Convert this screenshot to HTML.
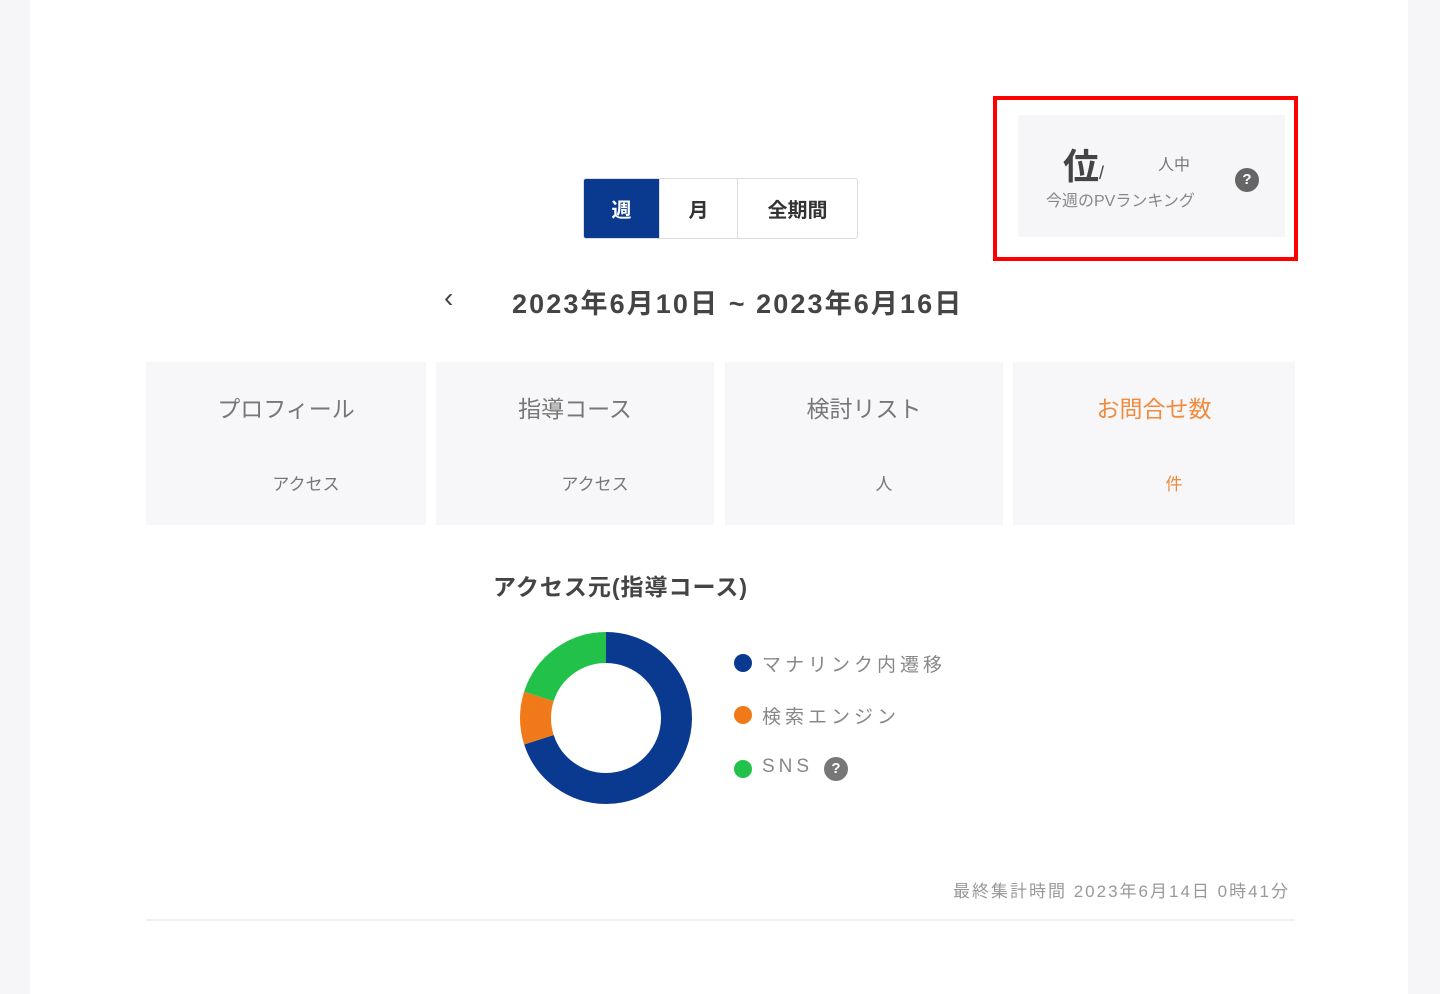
<!DOCTYPE html>
<html><head><meta charset="utf-8"><style>
*{margin:0;padding:0;box-sizing:border-box}
body{width:1440px;height:994px;background:#f6f6f8;font-family:"Liberation Sans","Noto Sans CJK JP",sans-serif;position:relative;overflow:hidden;color:#333}
.main{position:absolute;left:30px;top:0;width:1378px;height:994px;background:#fff}
.a{position:absolute}
.tog{left:583px;top:178px;height:61px;display:flex;border:1px solid #ddd;border-radius:3px;overflow:hidden}
.tog div{display:flex;align-items:center;justify-content:center;font-size:20px;font-weight:bold;color:#333;border-left:1px solid #ddd}
.card{top:362px;height:163px;background:#f7f7fa;text-align:center}
.card .t{position:absolute;top:28px;left:0;right:0;font-size:23px;color:#777}
.card .s{position:absolute;top:108px;left:0;right:0;font-size:17px;color:#777;padding-left:40px}
.dot{width:18px;height:18px;border-radius:50%}
.lg{font-size:19px;color:#888;letter-spacing:4px}
</style></head><body>
<div class="main"></div>
<div class="a" style="left:993px;top:96px;width:305px;height:165px;border:4px solid #f00"></div>
<div class="a" style="left:1018px;top:115px;width:267px;height:122px;background:#f6f6f9"></div>
<div class="a" style="left:1063px;top:138px;font-size:36px;font-weight:bold;color:#444">位<span style="font-size:18px;font-weight:normal">/</span></div>
<div class="a" style="left:1158px;top:151px;font-size:16px;color:#777">人中</div>
<div class="a" style="left:1046px;top:187px;font-size:16px;color:#888">今週のPVランキング</div>
<div class="a" style="left:1235px;top:168px;width:24px;height:24px;border-radius:50%;background:#666;color:#fff;font-size:15px;text-align:center;line-height:24px;font-weight:bold">?</div>

<div class="a tog"><div style="width:75px;background:#0a3a8f;color:#fff;border:none">週</div><div style="width:78px">月</div><div style="width:120px">全期間</div></div>

<div class="a" style="left:444px;top:282px;font-size:28px;color:#444">‹</div>
<div class="a" style="left:512px;top:282px;font-size:27px;font-weight:bold;color:#444;letter-spacing:2.1px">2023年6月10日 ~ 2023年6月16日</div>

<div class="a card" style="left:146px;width:280px"><div class="t">プロフィール</div><div class="s">アクセス</div></div>
<div class="a card" style="left:436px;width:278px"><div class="t">指導コース</div><div class="s">アクセス</div></div>
<div class="a card" style="left:725px;width:278px"><div class="t">検討リスト</div><div class="s">人</div></div>
<div class="a card" style="left:1013px;width:282px"><div class="t" style="color:#f08a3c">お問合せ数</div><div class="s" style="color:#f08a3c">件</div></div>

<div class="a" style="left:493px;top:568px;font-size:23px;font-weight:bold;color:#444;letter-spacing:1px">アクセス元(指導コース)</div>

<svg class="a" style="left:506px;top:618px" width="200" height="200" viewBox="0 0 200 200">
<g fill="none" stroke-width="31" transform="rotate(-90 100 100)">
<circle cx="100" cy="100" r="70.5" stroke="#0a3a8f" stroke-dasharray="310 1000"/>
<circle cx="100" cy="100" r="70.5" stroke="#f07a1a" stroke-dasharray="0 310 44 1000"/>
<circle cx="100" cy="100" r="70.5" stroke="#22c24a" stroke-dasharray="0 354 90 1000"/>
</g></svg>

<div class="a dot" style="left:734px;top:654px;background:#0a3a8f"></div>
<div class="a lg" style="left:762px;top:650px">マナリンク内遷移</div>
<div class="a dot" style="left:734px;top:706px;background:#f07a1a"></div>
<div class="a lg" style="left:762px;top:702px">検索エンジン</div>
<div class="a dot" style="left:734px;top:760px;background:#22c24a"></div>
<div class="a lg" style="left:762px;top:756px">SNS</div>
<div class="a" style="left:824px;top:757px;width:24px;height:24px;border-radius:50%;background:#777;color:#fff;font-size:15px;text-align:center;line-height:24px;font-weight:bold">?</div>

<div class="a" style="right:150px;top:877px;font-size:17px;color:#999;letter-spacing:2px">最終集計時間 2023年6月14日 0時41分</div>
<div class="a" style="left:146px;top:919px;width:1149px;height:2px;background:#f0f0f2"></div>
</body></html>
